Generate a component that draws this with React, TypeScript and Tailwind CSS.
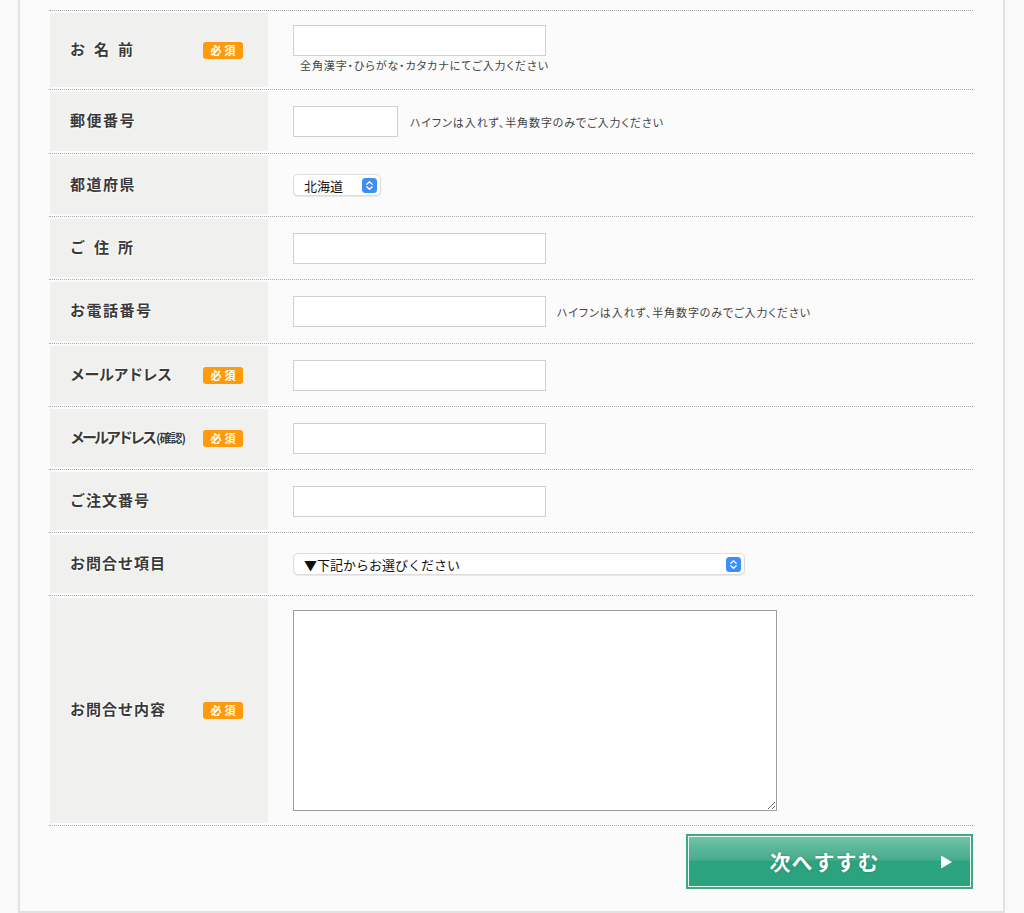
import React from "react";

const JP = '"Noto Sans CJK JP", "Noto Sans", sans-serif';

function Badge() {
  return (
    <span className="flex h-[17px] w-[40px] items-center justify-center rounded-[3px] bg-[#ff9a0a] text-[11px] font-bold leading-none tracking-[3px] text-white">
      <span className="pl-[3px]">必須</span>
    </span>
  );
}

function SelectArrow() {
  return (
    <svg width="15" height="15" viewBox="0 0 15 15" className="shrink-0">
      <rect x="0" y="0" width="15" height="15" rx="3.5" fill="#3d8ef7" />
      <path d="M4.8 6.2 L7.5 3.8 L10.2 6.2" stroke="#fff" strokeWidth="1.3" fill="none" strokeLinecap="round" strokeLinejoin="round" />
      <path d="M4.8 8.8 L7.5 11.2 L10.2 8.8" stroke="#fff" strokeWidth="1.3" fill="none" strokeLinecap="round" strokeLinejoin="round" />
    </svg>
  );
}

function FakeSelect({ text, width }: { text: string; width: string }) {
  return (
    <div
      className={`flex h-[22px] ${width} items-center justify-between rounded-[5px] border border-[#dcdcdc] bg-white pl-[10px] pr-[3px] shadow-[0_1px_1px_rgba(0,0,0,0.08)]`}
    >
      <span className="text-[13px] leading-none text-[#111]">{text}</span>
      <SelectArrow />
    </div>
  );
}

function TextInput({ width }: { width: string }) {
  return (
    <input
      type="text"
      className={`h-[31px] ${width} border border-[#cbd3cf] bg-white outline-none`}
    />
  );
}

function Hint({ children }: { children: React.ReactNode }) {
  return (
    <span className="text-[11px] leading-[13px] tracking-[0.9px] text-[#444] [font-feature-settings:'palt']">
      {children}
    </span>
  );
}

function Row({
  label,
  required,
  height,
  children,
}: {
  label: React.ReactNode;
  required?: boolean;
  height: string;
  children: React.ReactNode;
}) {
  return (
    <div className="flex border-t border-dotted border-[#a9a9a9] pt-[2px] pb-[2px] pl-[1px]">
      <div
        className={`flex ${height} w-[218px] shrink-0 items-center justify-between bg-[#f0f0ee] pl-[20px] pr-[25px]`}
      >
        <span className="mb-[4px] text-[15px] font-bold leading-none text-[#3a3a3a] [text-shadow:0_0_2px_#fff,0_0_2px_#fff,0_0_3px_#fff]">
          {label}
        </span>
        {required ? <Badge /> : null}
      </div>
      <div className="flex flex-1 items-center pl-[25px]">{children}</div>
    </div>
  );
}

export default function App() {
  return (
    <div className="h-[913px] w-[1024px] overflow-hidden bg-[#f9f9f9]" style={{ fontFamily: JP }}>
      <div className="ml-[18px] h-[913px] w-[987px] border-x-2 border-b-2 border-[#e2e2e2] bg-[#fbfbfb] pt-[10px] pl-[29px]">
        <div className="w-[924px]">
          <Row label={<span className="tracking-[9px]">お名前</span>} required height="h-[74px]">
            <div className="flex flex-col pb-[3px]">
              <TextInput width="w-[253px]" />
              <div className="ml-[7px] mt-[1px] leading-[13px]">
                <Hint>全角漢字・ひらがな・カタカナにてご入力ください</Hint>
              </div>
            </div>
          </Row>
          <Row label={<span className="tracking-[1.5px]">郵便番号</span>} height="h-[59px]">
            <TextInput width="w-[105px]" />
            <span className="ml-[12px] leading-[13px]">
              <Hint>ハイフンは入れず、半角数字のみでご入力ください</Hint>
            </span>
          </Row>
          <Row label={<span className="tracking-[1.5px]">都道府県</span>} height="h-[58px]">
            <FakeSelect text="北海道" width="w-[88px]" />
          </Row>
          <Row label={<span className="tracking-[9px]">ご住所</span>} height="h-[58px]">
            <TextInput width="w-[253px]" />
          </Row>
          <Row label={<span className="tracking-[1.5px]">お電話番号</span>} height="h-[59px]">
            <TextInput width="w-[253px]" />
            <span className="ml-[11px] leading-[13px]">
              <Hint>ハイフンは入れず、半角数字のみでご入力ください</Hint>
            </span>
          </Row>
          <Row label={<span className="tracking-[-0.5px]">メールアドレス</span>} required height="h-[58px]">
            <TextInput width="w-[253px]" />
          </Row>
          <Row
            label={
              <span className="tracking-[-3px]">
                メールアドレス
                <span className="ml-[2px] text-[12px] tracking-[-1px]">(確認)</span>
              </span>
            }
            required
            height="h-[58px]"
          >
            <TextInput width="w-[253px]" />
          </Row>
          <Row label={<span className="tracking-[1px]">ご注文番号</span>} height="h-[58px]">
            <TextInput width="w-[253px]" />
          </Row>
          <Row label={<span className="tracking-[1px]">お問合せ項目</span>} height="h-[58px]">
            <FakeSelect text="▼下記からお選びください" width="w-[452px]" />
          </Row>
          <Row label={<span className="tracking-[1px]">お問合せ内容</span>} required height="h-[225px]">
            <textarea className="h-[201px] w-[484px] border border-[#9c9c9c] bg-white outline-none" />
          </Row>
          <div className="border-t border-dotted border-[#a9a9a9]" />
          <div className="flex justify-end pt-[8px]">
            <button
              type="button"
              className="relative flex h-[55px] w-[287px] items-center justify-center border-2 border-[#3da985] bg-[linear-gradient(to_bottom,#74c4a7_0%,#5ab698_25%,#48ad8c_46%,#2ca47f_50%,#2aa27d_100%)] shadow-[inset_0_0_0_1px_rgba(255,255,255,0.9)]"
            >
              <span className="mr-[10px] text-[21px] font-bold tracking-[1px] text-white [text-shadow:0_0_2px_rgba(0,80,50,0.5)]">
                次へすすむ
              </span>
              <svg
                width="11"
                height="13"
                viewBox="0 0 11 13"
                className="absolute right-[19px] top-1/2 -translate-y-1/2"
              >
                <polygon points="0,0 11,6.5 0,13" fill="#fff" />
              </svg>
            </button>
          </div>
        </div>
      </div>
    </div>
  );
}
